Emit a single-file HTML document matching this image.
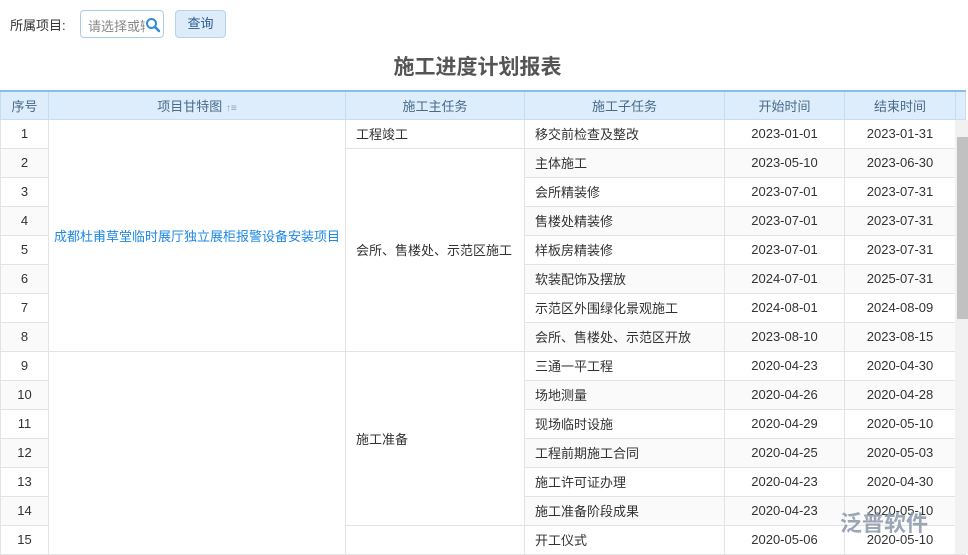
<!DOCTYPE html>
<html><head><meta charset="utf-8"><style>
*{margin:0;padding:0;box-sizing:border-box}
body{width:968px;height:554px;overflow:hidden;background:#fff;font-family:"Liberation Sans","Noto Sans CJK SC",sans-serif;font-size:13px;color:#333;position:relative}
.lbl{position:absolute;left:10px;top:15px;font-size:13px}
.inp{position:absolute;left:80px;top:10px;width:84px;height:28px;border:1px solid #a9cbe8;border-radius:4px;color:#888;padding:5px 0 0 7px;font-size:13px;overflow:hidden;white-space:nowrap}
.inp svg{position:absolute;right:2px;top:6px;background:#fff}
.btn{position:absolute;left:175px;top:10px;width:51px;height:28px;background:#deecfa;border:1px solid #b7d3ec;border-radius:4px;color:#2a5d8f;text-align:center;line-height:26px}
h1{position:absolute;left:0;width:955px;top:51px;text-align:center;font-size:21px;color:#555;font-weight:bold}
table{position:absolute;left:0;top:90px;border-collapse:collapse;table-layout:fixed;width:965px}
th{background:#deedfb;height:28px;font-weight:normal;color:#4a6a8a;border:1px solid #c6dcef;border-top:2px solid #8cbde8}
td{height:29px;border:1px solid #e3e3e3;padding:0}
td.c{text-align:center}
td.l{padding-left:10px}
tr.z td.s{background:#fafafa}
.proj{color:#1e88e5;text-align:center}
.sb{position:absolute;left:955px;top:120px;width:13px;height:434px;background:#f1f1f1}
.th{position:absolute;left:957px;top:137px;width:11px;height:182px;background:#c1c1c1}
.wm{position:absolute;left:840px;top:506px;font-size:22px;color:#8a97ab;font-weight:bold;opacity:.85}
</style></head><body>
<div class="lbl">所属项目:</div>
<div class="inp">请选择或输<svg width="16" height="16" viewBox="0 0 16 16"><circle cx="6.5" cy="6.5" r="4.5" fill="none" stroke="#2d8bd8" stroke-width="2"/><path d="M10 10l4 4" stroke="#2d8bd8" stroke-width="2.4" stroke-linecap="round"/></svg></div>
<div class="btn">查询</div>
<h1>施工进度计划报表</h1>
<table>
<colgroup><col style="width:48px"><col style="width:297px"><col style="width:179px"><col style="width:200px"><col style="width:120px"><col style="width:111px"><col style="width:10px"></colgroup>
<tr><th>序号</th><th>项目甘特图 <span style="font-size:10px;color:#99b">↑≡</span></th><th>施工主任务</th><th>施工子任务</th><th>开始时间</th><th>结束时间</th><th></th></tr>
<tr><td class="c">1</td><td rowspan="8" class="proj">成都杜甫草堂临时展厅独立展柜报警设备安装项目</td><td class="l">工程竣工</td><td class="l">移交前检查及整改</td><td class="c">2023-01-01</td><td class="c">2023-01-31</td><td></td></tr>
<tr class="z"><td class="c s">2</td><td rowspan="7" class="l">会所、售楼处、示范区施工</td><td class="l s">主体施工</td><td class="c s">2023-05-10</td><td class="c s">2023-06-30</td><td></td></tr>
<tr><td class="c">3</td><td class="l">会所精装修</td><td class="c">2023-07-01</td><td class="c">2023-07-31</td><td></td></tr>
<tr class="z"><td class="c s">4</td><td class="l s">售楼处精装修</td><td class="c s">2023-07-01</td><td class="c s">2023-07-31</td><td></td></tr>
<tr><td class="c">5</td><td class="l">样板房精装修</td><td class="c">2023-07-01</td><td class="c">2023-07-31</td><td></td></tr>
<tr class="z"><td class="c s">6</td><td class="l s">软装配饰及摆放</td><td class="c s">2024-07-01</td><td class="c s">2025-07-31</td><td></td></tr>
<tr><td class="c">7</td><td class="l">示范区外围绿化景观施工</td><td class="c">2024-08-01</td><td class="c">2024-08-09</td><td></td></tr>
<tr class="z"><td class="c s">8</td><td class="l s">会所、售楼处、示范区开放</td><td class="c s">2023-08-10</td><td class="c s">2023-08-15</td><td></td></tr>
<tr><td class="c">9</td><td rowspan="7"></td><td rowspan="6" class="l">施工准备</td><td class="l">三通一平工程</td><td class="c">2020-04-23</td><td class="c">2020-04-30</td><td></td></tr>
<tr class="z"><td class="c s">10</td><td class="l s">场地测量</td><td class="c s">2020-04-26</td><td class="c s">2020-04-28</td><td></td></tr>
<tr><td class="c">11</td><td class="l">现场临时设施</td><td class="c">2020-04-29</td><td class="c">2020-05-10</td><td></td></tr>
<tr class="z"><td class="c s">12</td><td class="l s">工程前期施工合同</td><td class="c s">2020-04-25</td><td class="c s">2020-05-03</td><td></td></tr>
<tr><td class="c">13</td><td class="l">施工许可证办理</td><td class="c">2020-04-23</td><td class="c">2020-04-30</td><td></td></tr>
<tr class="z"><td class="c s">14</td><td class="l s">施工准备阶段成果</td><td class="c s">2020-04-23</td><td class="c s">2020-05-10</td><td></td></tr>
<tr><td class="c">15</td><td></td><td class="l">开工仪式</td><td class="c">2020-05-06</td><td class="c">2020-05-10</td><td></td></tr>
</table>
<div class="sb"></div><div class="th"></div>
<div class="wm">泛普软件</div>
</body></html>
